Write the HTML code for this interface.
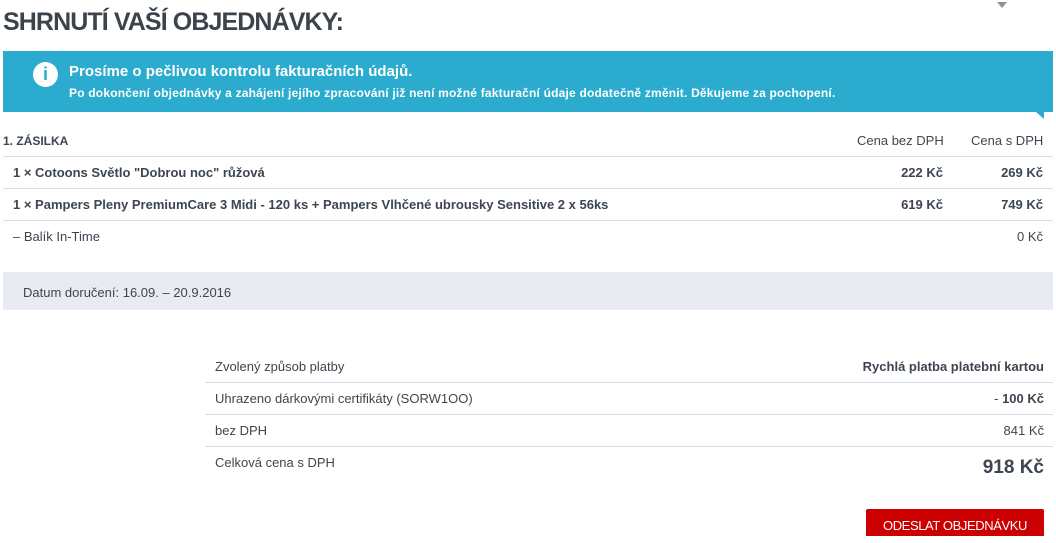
<!DOCTYPE html>
<html><head><meta charset="utf-8"><style>
body{margin:0;width:1056px;height:536px;overflow:hidden;background:#fff;font-family:"Liberation Sans",Arial,sans-serif;color:#3d4650;position:relative}
.a{position:absolute;white-space:nowrap}
.line{position:absolute;height:1px;background:#d3e0ea}
.r{text-align:right}
</style></head><body>
<div class="a" style="left:3px;top:8px;font-size:25px;font-weight:bold;color:#3b444c;letter-spacing:-0.9px">SHRNUTÍ VAŠÍ OBJEDNÁVKY:</div>
<div class="a" style="left:997px;top:2px;width:0;height:0;border-left:5px solid transparent;border-right:5px solid transparent;border-top:6px solid #8a939b"></div>
<div class="a" style="left:3px;top:51px;width:1050px;height:61px;background:#2babcd"></div>
<div class="a" style="left:1036px;top:112px;width:0;height:0;border-left:8px solid transparent;border-top:7px solid #2babcd"></div>
<div class="a" style="left:33px;top:62px;width:25px;height:25px;border-radius:50%;background:#fff;color:#2babcd;font-weight:bold;font-size:18px;text-align:center;line-height:25px">i</div>
<div class="a" style="left:69px;top:63px;font-size:15px;font-weight:bold;color:#fff">Prosíme o pečlivou kontrolu fakturačních údajů.</div>
<div class="a" style="left:69px;top:86px;font-size:12px;font-weight:bold;color:#fff;letter-spacing:0.2px">Po dokončení objednávky a zahájení jejího zpracování již není možné fakturační údaje dodatečně změnit. Děkujeme za pochopení.</div>
<div class="a" style="left:3px;top:134px;font-size:12px;font-weight:bold">1. ZÁSILKA</div>
<div class="a" style="left:857px;top:133px;font-size:13px">Cena bez DPH</div>
<div class="a" style="left:971px;top:133px;font-size:13px">Cena s DPH</div>
<div class="line" style="left:3px;top:156px;width:1050px"></div>
<div class="a" style="left:13px;top:165px;font-size:13px;font-weight:bold">1 × Cotoons Světlo "Dobrou noc" růžová</div>
<div class="a r" style="right:113px;top:165px;font-size:13px;font-weight:bold">222 Kč</div>
<div class="a r" style="right:13px;top:165px;font-size:13px;font-weight:bold">269 Kč</div>
<div class="line" style="left:3px;top:188px;width:1050px"></div>
<div class="a" style="left:13px;top:197px;font-size:13px;font-weight:bold">1 × Pampers Pleny PremiumCare 3 Midi - 120 ks + Pampers Vlhčené ubrousky Sensitive 2 x 56ks</div>
<div class="a r" style="right:113px;top:197px;font-size:13px;font-weight:bold">619 Kč</div>
<div class="a r" style="right:13px;top:197px;font-size:13px;font-weight:bold">749 Kč</div>
<div class="line" style="left:3px;top:220px;width:1050px"></div>
<div class="a" style="left:13px;top:229px;font-size:13px">– Balík In-Time</div>
<div class="a r" style="right:13px;top:229px;font-size:13px">0 Kč</div>
<div class="a" style="left:3px;top:272px;width:1050px;height:38px;background:#e8ecf2"></div>
<div class="a" style="left:23px;top:285px;font-size:13px">Datum doručení: 16.09. – 20.9.2016</div>
<div class="a" style="left:215px;top:359px;font-size:13px">Zvolený způsob platby</div>
<div class="a r" style="right:12px;top:359px;font-size:13px;font-weight:bold">Rychlá platba platební kartou</div>
<div class="line" style="left:205px;top:382px;width:848px"></div>
<div class="a" style="left:215px;top:391px;font-size:13px">Uhrazeno dárkovými certifikáty (SORW1OO)</div>
<div class="a r" style="right:12px;top:391px;font-size:13px"><span>- </span><b>100 Kč</b></div>
<div class="line" style="left:205px;top:414px;width:848px"></div>
<div class="a" style="left:215px;top:423px;font-size:13px">bez DPH</div>
<div class="a r" style="right:12px;top:423px;font-size:13px">841 Kč</div>
<div class="line" style="left:205px;top:446px;width:848px"></div>
<div class="a" style="left:215px;top:455px;font-size:13px">Celková cena s DPH</div>
<div class="a r" style="right:12px;top:457px;font-size:19px;font-weight:bold">918 Kč</div>
<div class="a" style="left:866px;top:509px;width:178px;height:27px;background:#cc0000;border-radius:2px 2px 0 0;color:#fff;font-size:13px;text-align:center;line-height:34px;letter-spacing:-0.4px">ODESLAT OBJEDNÁVKU</div>
</body></html>
